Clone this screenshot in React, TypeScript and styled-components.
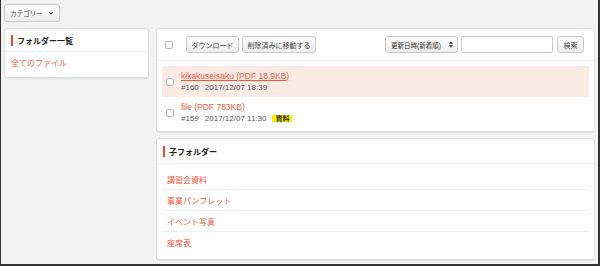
import * as React from 'react';
import styled, { createGlobalStyle } from 'styled-components';

const RED = '#ec5a3d';

const Global = createGlobalStyle`
	html, body {
		margin: 0;
		padding: 0;
		background: #333;
	}
	body {
		font-family: 'Liberation Sans', 'Noto Sans CJK JP', sans-serif;
		font-size: 8px;
		color: #333;
	}
`;

const Frame = styled.div`
	box-sizing: border-box;
	width: 600px;
	height: 266px;
	background: #f2f2f2;
	border-left: 1px solid #333;
	border-right: 2px solid #333;
	border-bottom: 2px solid #333;
	padding: 4px 3px 0 3px;
`;

const TopBar = styled.div`
	height: 18px;
	margin-bottom: 6px;
	display: flex;
`;

const Btn = styled.button<{ $w?: number }>`
	box-sizing: border-box;
	height: 17px;
	${({ $w }) => ($w ? `width: ${$w}px;` : '')}
	padding: 0 4px;
	font-family: inherit;
	font-size: 7px;
	color: #444;
	background: linear-gradient(#fdfdfd, #ececec);
	border: 1px solid #c8c8c8;
	border-radius: 3px;
	display: inline-flex;
	align-items: center;
	justify-content: center;
	gap: 5px;
	white-space: nowrap;
	cursor: pointer;
	svg {
		flex: none;
	}
`;

const CategoryBtn = styled(Btn)`
	height: 18px;
	width: 56px;
	font-size: 6.5px;
`;

const SearchBtn = styled(Btn)`
	margin-left: 1px;
`;

const Columns = styled.div`
	display: flex;
	gap: 7px;
	align-items: flex-start;
`;

const Side = styled.div`
	width: 145px;
	flex: none;
`;

const Main = styled.div`
	flex: 1;
	display: flex;
	flex-direction: column;
	gap: 6px;
`;

const Panel = styled.section`
	box-sizing: border-box;
	background: #fff;
	border: 1px solid #dedede;
	border-radius: 3px;
	box-shadow: 0 1px 0 #e2e2e2;
`;

const PanelHeader = styled.h3<{ $h: number }>`
	margin: 0;
	height: ${({ $h }) => $h}px;
	display: flex;
	align-items: center;
	padding-left: 6px;
	gap: 4px;
	font-size: 8px;
	font-weight: bold;
	color: #222;
	border-bottom: 1px solid #f0f0f0;
	&::before {
		content: '';
		width: 2px;
		height: 11px;
		background: #e8492b;
	}
`;

const SideLink = styled.a`
	display: block;
	padding: 5px 6px 7px;
	line-height: 13px;
	color: ${RED};
	text-decoration: none;
	font-size: 8px;
`;

const Toolbar = styled.div`
	height: 31px;
	display: flex;
	align-items: center;
	padding: 0 10px 0 8px;
	border-bottom: 1px solid #f0f0f0;
	gap: 3px;
`;

const CheckGap = styled.span`
	width: 7px;
`;

const Check = styled.input.attrs({ type: 'checkbox' })`
	appearance: none;
	margin: 0;
	width: 8px;
	height: 8px;
	border: 1px solid #b5b5b5;
	border-radius: 2px;
	background: #fff;
	flex: none;
`;

const Spacer = styled.div`
	flex: 1;
`;

const Select = styled.div`
	box-sizing: border-box;
	width: 73px;
	height: 17px;
	display: flex;
	align-items: center;
	justify-content: space-between;
	padding: 0 4px 0 5px;
	font-size: 6.5px;
	color: #333;
	white-space: nowrap;
	background: linear-gradient(#fdfdfd, #ececec);
	border: 1px solid #c8c8c8;
	border-radius: 3px;
	svg {
		flex: none;
	}
`;

const Input = styled.input`
	box-sizing: border-box;
	width: 92px;
	height: 17px;
	border: 1px solid #c8c8c8;
	border-radius: 2px;
	margin: 0;
`;

const List = styled.div`
	padding: 5px 5px 3px;
`;

const Row = styled.div<{ $active?: boolean }>`
	display: flex;
	align-items: center;
	gap: 7px;
	height: 31px;
	padding: 0 4px;
	background: ${({ $active }) => ($active ? '#fcebe5' : 'transparent')};
`;

const RowText = styled.div`
	display: flex;
	flex-direction: column;
	line-height: 12px;
`;

const FileLink = styled.a<{ $active?: boolean }>`
	color: ${RED};
	font-size: 8.5px;
	text-decoration: ${({ $active }) => ($active ? 'underline' : 'none')};
`;

const Meta = styled.div`
	display: flex;
	align-items: center;
	gap: 6px;
	color: #555;
	font-size: 8px;
`;

const Badge = styled.span`
	background: #ffec00;
	color: #333;
	font-size: 7px;
	font-weight: bold;
	line-height: 9px;
	padding: 0 3px;
	margin-left: 6px;
`;

const FolderList = styled.ul`
	list-style: none;
	margin: 0;
	padding: 5px 5px 6px;
`;

const FolderItem = styled.li`
	height: 21px;
	display: flex;
	align-items: center;
	padding-left: 5px;
	border-bottom: 1px solid #f0f0f0;
	box-sizing: border-box;
	&:last-child {
		border-bottom: none;
	}
	a {
		color: ${RED};
		text-decoration: none;
		font-size: 8px;
	}
`;

const files = [
	{ name: 'kikakuseisaku (PDF 18.9KB)', id: '#160', date: '2017/12/07 18:39', active: true },
	{ name: 'file (PDF 783KB)', id: '#159', date: '2017/12/07 11:30', tag: '資料' },
];

const folders = ['講習会資料', '事業パンフレット', 'イベント写真', '座席表'];

export default function App() {
	return (
		<Frame>
			<Global />
			<TopBar>
				<CategoryBtn>
					カテゴリー
					<svg width="6" height="4" viewBox="0 0 6 4">
						<path d="M1 1l2 2 2-2" stroke="#555" strokeWidth="1.1" fill="none" />
					</svg>
				</CategoryBtn>
			</TopBar>
			<Columns>
				<Side>
					<Panel>
						<PanelHeader $h={22}>フォルダー一覧</PanelHeader>
						<SideLink href="#">全てのファイル</SideLink>
					</Panel>
				</Side>
				<Main>
					<Panel>
						<Toolbar>
							<Check />
							<CheckGap />
							<Btn $w={53}>ダウンロード</Btn>
							<Btn $w={74}>削除済みに移動する</Btn>
							<Spacer />
							<Select>
								<span>更新日時(新着順)</span>
								<svg width="4" height="7" viewBox="0 0 4 7">
									<path d="M0 2.8L2 0.4 4 2.8zM0 4.2L2 6.6 4 4.2z" fill="#333" />
								</svg>
							</Select>
							<Input />
							<SearchBtn $w={27}>検索</SearchBtn>
						</Toolbar>
						<List>
							{files.map((f) => (
								<Row key={f.id} $active={f.active}>
									<Check />
									<RowText>
										<FileLink href="#" $active={f.active}>
											{f.name}
										</FileLink>
										<Meta>
											<span>{f.id}</span>
											<span>
												{f.date}
												{f.tag && <Badge>{f.tag}</Badge>}
											</span>
										</Meta>
									</RowText>
								</Row>
							))}
						</List>
					</Panel>
					<Panel>
						<PanelHeader $h={24}>子フォルダー</PanelHeader>
						<FolderList>
							{folders.map((f) => (
								<FolderItem key={f}>
									<a href="#">{f}</a>
								</FolderItem>
							))}
						</FolderList>
					</Panel>
				</Main>
			</Columns>
		</Frame>
	);
}
